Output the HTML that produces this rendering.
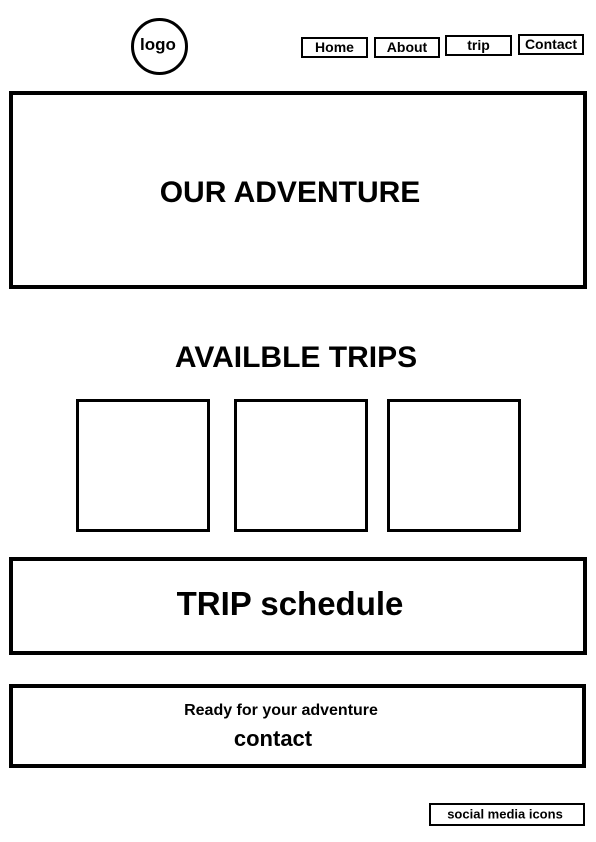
<!DOCTYPE html>
<html><head><style>
body{margin:0;width:596px;height:842px;background:#fff;position:relative;overflow:hidden;font-family:"Liberation Sans",Arial,sans-serif;font-weight:bold;color:#000}
.a{position:absolute;box-sizing:border-box;border:3px solid #000}
.t{position:absolute;white-space:nowrap;transform:translate(-50%,-50%)}
.n{position:absolute;box-sizing:border-box;border:2px solid #000;font-size:14px;text-align:center;line-height:16px}
</style></head><body>
<div class="a" style="left:131px;top:18px;width:57px;height:57px;border-radius:50%"></div>
<div class="t" style="left:158px;top:45px;font-size:17px">logo</div>
<div class="n" style="left:301px;top:37px;width:67px;height:21px">Home</div>
<div class="n" style="left:374px;top:37px;width:66px;height:21px">About</div>
<div class="n" style="left:445px;top:35px;width:67px;height:21px">trip</div>
<div class="n" style="left:518px;top:34px;width:66px;height:21px">Contact</div>
<div class="a" style="left:9px;top:91px;width:578px;height:198px;border-width:4px"></div>
<div class="t" style="left:290px;top:193px;font-size:30px">OUR ADVENTURE</div>
<div class="t" style="left:296px;top:358px;font-size:30px">AVAILBLE TRIPS</div>
<div class="a" style="left:76px;top:399px;width:134px;height:133px"></div>
<div class="a" style="left:234px;top:399px;width:134px;height:133px"></div>
<div class="a" style="left:387px;top:399px;width:134px;height:133px"></div>
<div class="a" style="left:9px;top:557px;width:578px;height:98px;border-width:4px"></div>
<div class="t" style="left:290px;top:604px;font-size:33px">TRIP schedule</div>
<div class="a" style="left:9px;top:684px;width:577px;height:84px;border-width:4px"></div>
<div class="t" style="left:281px;top:711px;font-size:16px">Ready for your adventure</div>
<div class="t" style="left:273px;top:739px;font-size:22px">contact</div>
<div class="a" style="left:429px;top:803px;width:156px;height:23px;border-width:2px"></div>
<div class="t" style="left:505px;top:814px;font-size:13px">social media icons</div>
</body></html>
